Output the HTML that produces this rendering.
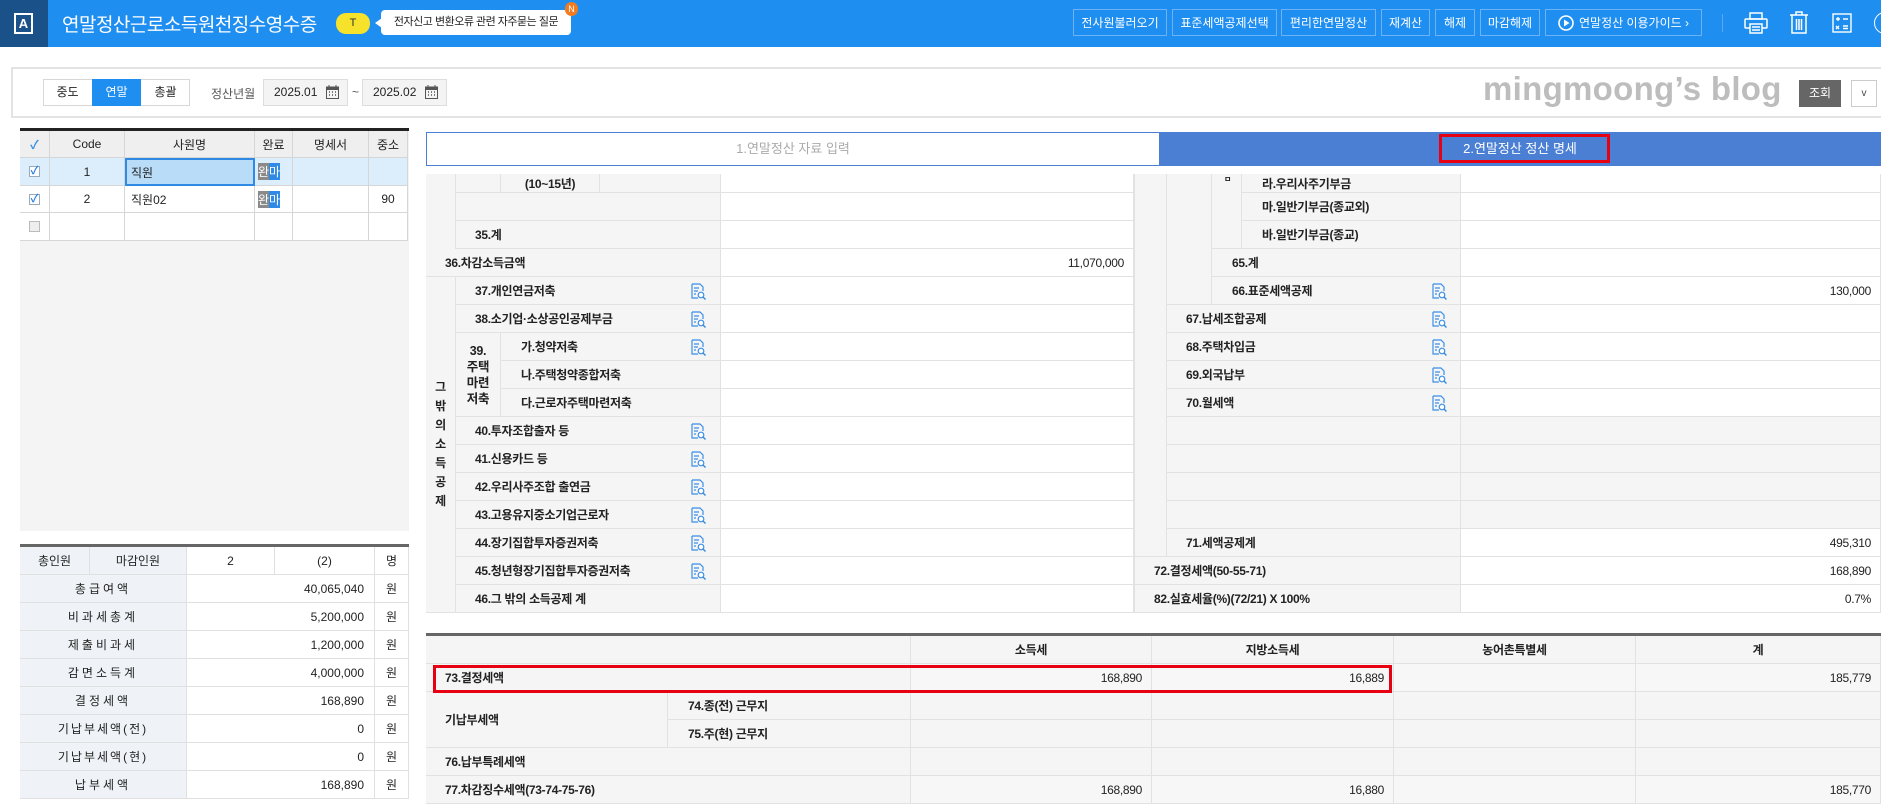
<!DOCTYPE html>
<html><head><meta charset="utf-8"><style>
*{margin:0;padding:0;box-sizing:border-box}
body{width:1881px;height:804px;position:relative;overflow:hidden;background:#fff;font-family:"Liberation Sans","Noto Sans CJK KR",sans-serif;font-size:12px;color:#222}
.p{position:absolute}
.a{position:absolute;display:flex;align-items:center;border-right:1px solid #e2e2e2;border-bottom:1px solid #e2e2e2;background:#f5f5f5;white-space:nowrap;font-weight:bold;letter-spacing:-0.3px}
.w{background:#fff;justify-content:flex-end;padding-right:9px;font-weight:normal}
.c{justify-content:center}
.hb{position:absolute;top:9px;height:27px;border:1px solid #6db2f4;color:#fff;font-size:12px;display:flex;align-items:center;justify-content:center}
.g{position:absolute;display:flex;align-items:center;justify-content:center;border-right:1px solid #d6d6d6;border-bottom:1px solid #d6d6d6;font-size:12px}
.s{position:absolute;display:flex;align-items:center;justify-content:center;border-right:1px solid #e0e0e0;border-bottom:1px solid #e0e0e0;font-size:12px;background:#eff3f7}
.ic{position:absolute;width:15px;height:17px}
</style></head><body>
<!-- header -->
<div class="p" style="left:0;top:0;width:1881px;height:47px;background:#1f8ef1"></div>
<div class="p" style="left:0;top:0;width:48px;height:47px;background:#1a5189"></div>
<div class="p" style="left:14px;top:13px;width:19px;height:21px;border:2px solid #fff;color:#fff;font-size:13px;font-weight:bold;text-align:center;line-height:17px">A</div>
<div class="p" style="left:62px;top:10px;color:#fff;font-size:19px;letter-spacing:-0.5px;font-family:'Noto Sans CJK KR',sans-serif">연말정산근로소득원천징수영수증</div>
<div class="p" style="left:336px;top:13px;width:34px;height:21px;border-radius:10px;background:#f7e22b;text-align:center;line-height:21px;font-size:11px;color:#333">T</div>
<div class="p" style="left:375px;top:18px;width:0;height:0;border-top:5px solid transparent;border-bottom:5px solid transparent;border-right:7px solid #fff"></div>
<div class="p" style="left:381px;top:10px;width:190px;height:25px;background:#fff;border-radius:4px;font-size:11px;line-height:25px;text-align:center;color:#222;letter-spacing:-0.5px">전자신고 변환오류 관련 자주묻는 질문</div>
<div class="p" style="left:565px;top:2px;width:13px;height:14px;border-radius:7px;background:#f27b21;color:#fff;font-size:9px;text-align:center;line-height:14px">N</div>
<div class="hb" style="left:1073px;width:94px">전사원불러오기</div>
<div class="hb" style="left:1172px;width:105px">표준세액공제선택</div>
<div class="hb" style="left:1281px;width:95px">편리한연말정산</div>
<div class="hb" style="left:1381px;width:49px">재계산</div>
<div class="hb" style="left:1435px;width:40px">해제</div>
<div class="hb" style="left:1480px;width:60px">마감해제</div>
<div class="hb" style="left:1545px;width:157px"><svg width="16" height="16" viewBox="0 0 16 16" style="margin-right:5px"><circle cx="8" cy="8" r="7" fill="none" stroke="#fff" stroke-width="1.6"/><path d="M6 4.5v7l5.5-3.5z" fill="#fff"/></svg>연말정산 이용가이드 ›</div>
<div class="p" style="left:1722px;top:14px;width:1px;height:18px;background:#5aa8f4"></div>
<svg class="p" style="left:1744px;top:12px" width="24" height="22" viewBox="0 0 24 22" fill="none" stroke="#fff" stroke-width="1.5"><rect x="6" y="1" width="12" height="6"/><rect x="1" y="7" width="22" height="9" rx="1"/><rect x="6" y="12" width="12" height="9" fill="#1f8ef1"/><path d="M8 15h8M8 18h8"/></svg>
<svg class="p" style="left:1789px;top:11px" width="20" height="23" viewBox="0 0 20 23" fill="none" stroke="#fff" stroke-width="1.5"><path d="M1 4h18M7 4V1h6v3M3 4v18h14V4M7.5 8v11M10 8v11M12.5 8v11"/></svg>
<svg class="p" style="left:1832px;top:13px" width="20" height="20" viewBox="0 0 20 20" fill="none" stroke="#fff" stroke-width="1.4"><rect x="1" y="1" width="18" height="18"/><path d="M4 6h4M6 4v4M11 6h5M4 13l3 3M7 13l-3 3M11 13h5M11 15.5h5"/></svg>
<div class="p" style="left:1874px;top:12px;width:22px;height:22px;border:1.5px solid #fff;border-radius:11px"></div>

<!-- toolbar panel -->
<div class="p" style="left:11px;top:67px;width:1870px;height:51px;border-top:2px solid #e3e3e3;border-bottom:2px solid #e3e3e3;border-left:2px solid #e3e3e3"></div>
<div class="p" style="left:43px;top:79px;width:147px;height:27px;border:1px solid #d7d7d7"></div>
<div class="p" style="left:43px;top:79px;width:49px;height:27px;line-height:27px;text-align:center">중도</div>
<div class="p" style="left:92px;top:79px;width:49px;height:27px;line-height:27px;text-align:center;background:#1f8ef1;color:#fff">연말</div>
<div class="p" style="left:141px;top:79px;width:49px;height:27px;line-height:27px;text-align:center">총괄</div>
<div class="p" style="left:211px;top:85px;color:#555">정산년월</div>
<div class="p" style="left:263px;top:79px;width:85px;height:27px;background:#f4f4f4;border:1px solid #ddd;line-height:25px;padding-left:10px;font-size:12px">2025.01</div>
<div class="p" style="left:352px;top:85px;color:#555">~</div>
<div class="p" style="left:362px;top:79px;width:85px;height:27px;background:#f4f4f4;border:1px solid #ddd;line-height:25px;padding-left:10px;font-size:12px">2025.02</div>
<svg class="p" style="left:326px;top:85px" width="13" height="14" viewBox="0 0 13 14"><rect x="0.5" y="2" width="12" height="11.5" fill="none" stroke="#555"/><rect x="0.5" y="2" width="12" height="3" fill="#555"/><path d="M3 0v3M10 0v3" stroke="#555"/><path d="M3 7h1M6 7h1M9 7h1M3 10h1M6 10h1M9 10h1" stroke="#555" stroke-width="1.5"/></svg>
<svg class="p" style="left:425px;top:85px" width="13" height="14" viewBox="0 0 13 14"><rect x="0.5" y="2" width="12" height="11.5" fill="none" stroke="#555"/><rect x="0.5" y="2" width="12" height="3" fill="#555"/><path d="M3 0v3M10 0v3" stroke="#555"/><path d="M3 7h1M6 7h1M9 7h1M3 10h1M6 10h1M9 10h1" stroke="#555" stroke-width="1.5"/></svg>
<div class="p" style="left:1483px;top:70px;font-size:33px;font-weight:bold;color:#bdbdbd;letter-spacing:0.3px;font-family:'Liberation Sans',sans-serif">mingmoong’s blog</div>
<div class="p" style="left:1799px;top:80px;width:42px;height:27px;background:#666;color:#fff;line-height:27px;text-align:center">조회</div>
<div class="p" style="left:1851px;top:80px;width:26px;height:27px;border:1px solid #ccc;line-height:25px;text-align:center;font-size:10px;color:#444">v</div>

<!-- left grid -->
<div class="p" style="left:20px;top:128px;width:389px;height:403px;background:#f4f4f4;border-top:3px solid #222"></div>
<div class="g" style="left:20px;top:131px;width:30px;height:27px;background:#efefef;color:#3a8ee6;font-weight:bold">✓</div>
<div class="g" style="left:50px;top:131px;width:75px;height:27px;background:#efefef">Code</div>
<div class="g" style="left:125px;top:131px;width:130px;height:27px;background:#efefef">사원명</div>
<div class="g" style="left:255px;top:131px;width:38px;height:27px;background:#efefef">완료</div>
<div class="g" style="left:293px;top:131px;width:76px;height:27px;background:#efefef">명세서</div>
<div class="g" style="left:369px;top:131px;width:39px;height:27px;background:#efefef">중소</div>
<div class="g" style="left:20px;top:158px;width:30px;height:28px;background:#dcedfb"><span style="display:inline-block;width:11px;height:11px;border:1px solid #9ab;background:#fff;color:#2a7fe0;font-size:11px;line-height:9px;text-align:center;font-weight:bold">✓</span></div>
<div class="g" style="left:50px;top:158px;width:75px;height:28px;background:#dcedfb">1</div>
<div class="g" style="left:125px;top:158px;width:130px;height:28px;background:#b9dcf8;border:2px solid #2f8ae6;justify-content:flex-start;padding-left:4px">직원</div>
<div class="g" style="left:255px;top:158px;width:38px;height:28px;background:#dcedfb;justify-content:flex-start;padding-left:3px"><span style="background:#8a8a8a;color:#fff">완</span><span style="background:#2f8ae6;color:#fff">마</span></div>
<div class="g" style="left:293px;top:158px;width:76px;height:28px;background:#dcedfb"></div>
<div class="g" style="left:369px;top:158px;width:39px;height:28px;background:#dcedfb"></div>
<div class="g" style="left:20px;top:186px;width:30px;height:27px;background:#fff"><span style="display:inline-block;width:11px;height:11px;border:1px solid #9ab;background:#fff;color:#2a7fe0;font-size:11px;line-height:9px;text-align:center;font-weight:bold">✓</span></div>
<div class="g" style="left:50px;top:186px;width:75px;height:27px;background:#fff">2</div>
<div class="g" style="left:125px;top:186px;width:130px;height:27px;background:#fff;justify-content:flex-start;padding-left:6px">직원02</div>
<div class="g" style="left:255px;top:186px;width:38px;height:27px;background:#fff;justify-content:flex-start;padding-left:3px"><span style="background:#8a8a8a;color:#fff">완</span><span style="background:#2f8ae6;color:#fff">마</span></div>
<div class="g" style="left:293px;top:186px;width:76px;height:27px;background:#fff"></div>
<div class="g" style="left:369px;top:186px;width:39px;height:27px;background:#fff">90</div>
<div class="g" style="left:20px;top:213px;width:30px;height:28px;background:#fff"><span style="display:inline-block;width:11px;height:11px;border:1px solid #bbb;background:#eee"></span></div>
<div class="g" style="left:50px;top:213px;width:75px;height:28px;background:#fff"></div>
<div class="g" style="left:125px;top:213px;width:130px;height:28px;background:#fff"></div>
<div class="g" style="left:255px;top:213px;width:38px;height:28px;background:#fff"></div>
<div class="g" style="left:293px;top:213px;width:76px;height:28px;background:#fff"></div>
<div class="g" style="left:369px;top:213px;width:39px;height:28px;background:#fff"></div>

<!-- summary -->
<div class="p" style="left:20px;top:544px;width:389px;height:3px;background:#666"></div>
<div class="s" style="left:20px;top:547px;width:70px;height:28px">총인원</div>
<div class="s" style="left:90px;top:547px;width:97px;height:28px">마감인원</div>
<div class="s" style="left:187px;top:547px;width:88px;height:28px;background:#fff">2</div>
<div class="s" style="left:275px;top:547px;width:100px;height:28px;background:#fff">(2)</div>
<div class="s" style="left:375px;top:547px;width:34px;height:28px;background:#fff">명</div>
<div class="s" style="left:20px;top:575px;width:167px;height:28px;letter-spacing:3px">총급여액</div><div class="s" style="left:187px;top:575px;width:188px;height:28px;background:#fff;justify-content:flex-end;padding-right:10px">40,065,040</div><div class="s" style="left:375px;top:575px;width:34px;height:28px;background:#fff">원</div>
<div class="s" style="left:20px;top:603px;width:167px;height:28px;letter-spacing:3px">비과세총계</div><div class="s" style="left:187px;top:603px;width:188px;height:28px;background:#fff;justify-content:flex-end;padding-right:10px">5,200,000</div><div class="s" style="left:375px;top:603px;width:34px;height:28px;background:#fff">원</div>
<div class="s" style="left:20px;top:631px;width:167px;height:28px;letter-spacing:3px">제출비과세</div><div class="s" style="left:187px;top:631px;width:188px;height:28px;background:#fff;justify-content:flex-end;padding-right:10px">1,200,000</div><div class="s" style="left:375px;top:631px;width:34px;height:28px;background:#fff">원</div>
<div class="s" style="left:20px;top:659px;width:167px;height:28px;letter-spacing:3px">감면소득계</div><div class="s" style="left:187px;top:659px;width:188px;height:28px;background:#fff;justify-content:flex-end;padding-right:10px">4,000,000</div><div class="s" style="left:375px;top:659px;width:34px;height:28px;background:#fff">원</div>
<div class="s" style="left:20px;top:687px;width:167px;height:28px;letter-spacing:3px">결정세액</div><div class="s" style="left:187px;top:687px;width:188px;height:28px;background:#fff;justify-content:flex-end;padding-right:10px">168,890</div><div class="s" style="left:375px;top:687px;width:34px;height:28px;background:#fff">원</div>
<div class="s" style="left:20px;top:715px;width:167px;height:28px;letter-spacing:2px">기납부세액(전)</div><div class="s" style="left:187px;top:715px;width:188px;height:28px;background:#fff;justify-content:flex-end;padding-right:10px">0</div><div class="s" style="left:375px;top:715px;width:34px;height:28px;background:#fff">원</div>
<div class="s" style="left:20px;top:743px;width:167px;height:28px;letter-spacing:2px">기납부세액(현)</div><div class="s" style="left:187px;top:743px;width:188px;height:28px;background:#fff;justify-content:flex-end;padding-right:10px">0</div><div class="s" style="left:375px;top:743px;width:34px;height:28px;background:#fff">원</div>
<div class="s" style="left:20px;top:771px;width:167px;height:28px;letter-spacing:3px">납부세액</div><div class="s" style="left:187px;top:771px;width:188px;height:28px;background:#fff;justify-content:flex-end;padding-right:10px">168,890</div><div class="s" style="left:375px;top:771px;width:34px;height:28px;background:#fff">원</div>

<!-- tabs -->
<div class="p" style="left:426px;top:132px;width:733px;height:34px;border:1px solid #4a7fd4;border-right:none;line-height:32px;text-align:center;color:#aaa;font-size:13px">1.연말정산 자료 입력</div>
<div class="p" style="left:1159px;top:132px;width:722px;height:34px;background:#4a7fd4;line-height:34px;text-align:center;color:#fff;font-size:13px">2.연말정산 정산 명세</div>
<div class="p" style="left:1439px;top:134px;width:171px;height:29px;border:3px solid #e60012"></div>

<!-- main table left -->
<div class="a" style="left:426px;top:174px;width:30px;height:75px;border-bottom:none"></div>
<div class="a" style="left:456px;top:174px;width:45px;height:19px"></div>
<div class="a c" style="left:501px;top:174px;width:99px;height:19px">(10~15년)</div>
<div class="a" style="left:600px;top:174px;width:121px;height:19px"></div>
<div class="a w" style="left:721px;top:174px;width:413px;height:19px"></div>
<div class="a" style="left:456px;top:193px;width:265px;height:28px"></div>
<div class="a w" style="left:721px;top:193px;width:413px;height:28px"></div>
<div class="a" style="left:456px;top:221px;width:265px;height:28px;padding-left:19px">35.계</div>
<div class="a w" style="left:721px;top:221px;width:413px;height:28px"></div>
<div class="a" style="left:426px;top:249px;width:295px;height:28px;padding-left:19px">36.차감소득금액</div>
<div class="a w" style="left:721px;top:249px;width:413px;height:28px">11,070,000</div>
<div class="a c" style="left:426px;top:277px;width:30px;height:336px;white-space:normal;text-align:center;line-height:19px;padding:0 9px">그 밖 의 소 득 공 제</div>

<div class="a" style="left:456px;top:277px;width:265px;height:28px;padding-left:19px">37.개인연금저축</div><div class="a w" style="left:721px;top:277px;width:413px;height:28px"></div>
<div class="a" style="left:456px;top:305px;width:265px;height:28px;padding-left:19px">38.소기업·소상공인공제부금</div><div class="a w" style="left:721px;top:305px;width:413px;height:28px"></div>
<div class="a c" style="left:456px;top:333px;width:45px;height:84px;text-align:center;line-height:16px;font-size:12.5px">39.<br>주택<br>마련<br>저축</div>
<div class="a" style="left:501px;top:333px;width:220px;height:28px;padding-left:20px">가.청약저축</div><div class="a w" style="left:721px;top:333px;width:413px;height:28px"></div>
<div class="a" style="left:501px;top:361px;width:220px;height:28px;padding-left:20px">나.주택청약종합저축</div><div class="a w" style="left:721px;top:361px;width:413px;height:28px"></div>
<div class="a" style="left:501px;top:389px;width:220px;height:28px;padding-left:20px">다.근로자주택마련저축</div><div class="a w" style="left:721px;top:389px;width:413px;height:28px"></div>
<div class="a" style="left:456px;top:417px;width:265px;height:28px;padding-left:19px">40.투자조합출자 등</div><div class="a w" style="left:721px;top:417px;width:413px;height:28px"></div>
<div class="a" style="left:456px;top:445px;width:265px;height:28px;padding-left:19px">41.신용카드 등</div><div class="a w" style="left:721px;top:445px;width:413px;height:28px"></div>
<div class="a" style="left:456px;top:473px;width:265px;height:28px;padding-left:19px">42.우리사주조합 출연금</div><div class="a w" style="left:721px;top:473px;width:413px;height:28px"></div>
<div class="a" style="left:456px;top:501px;width:265px;height:28px;padding-left:19px">43.고용유지중소기업근로자</div><div class="a w" style="left:721px;top:501px;width:413px;height:28px"></div>
<div class="a" style="left:456px;top:529px;width:265px;height:28px;padding-left:19px">44.장기집합투자증권저축</div><div class="a w" style="left:721px;top:529px;width:413px;height:28px"></div>
<div class="a" style="left:456px;top:557px;width:265px;height:28px;padding-left:19px">45.청년형장기집합투자증권저축</div><div class="a w" style="left:721px;top:557px;width:413px;height:28px"></div>
<div class="a" style="left:456px;top:585px;width:265px;height:28px;padding-left:19px">46.그 밖의 소득공제 계</div><div class="a w" style="left:721px;top:585px;width:413px;height:28px"></div>

<!-- main table right -->
<div class="a" style="left:1134px;top:174px;width:33px;height:383px;border-left:1px solid #e2e2e2"></div>
<div class="a" style="left:1167px;top:174px;width:45px;height:131px"></div>
<div class="a" style="left:1212px;top:174px;width:30px;height:75px;align-items:flex-start;padding-left:12px;font-size:8px">ㅁ</div>
<div class="a" style="left:1242px;top:174px;width:219px;height:19px;padding-left:20px">라.우리사주기부금</div><div class="a w" style="left:1461px;top:174px;width:420px;height:19px"></div>
<div class="a" style="left:1242px;top:193px;width:219px;height:28px;padding-left:20px">마.일반기부금(종교외)</div><div class="a w" style="left:1461px;top:193px;width:420px;height:28px"></div>
<div class="a" style="left:1242px;top:221px;width:219px;height:28px;padding-left:20px">바.일반기부금(종교)</div><div class="a w" style="left:1461px;top:221px;width:420px;height:28px"></div>
<div class="a" style="left:1212px;top:249px;width:249px;height:28px;padding-left:20px">65.계</div><div class="a w" style="left:1461px;top:249px;width:420px;height:28px"></div>
<div class="a" style="left:1212px;top:277px;width:249px;height:28px;padding-left:20px">66.표준세액공제</div><div class="a w" style="left:1461px;top:277px;width:420px;height:28px">130,000</div>
<div class="a" style="left:1167px;top:305px;width:294px;height:28px;padding-left:19px">67.납세조합공제</div><div class="a w" style="left:1461px;top:305px;width:420px;height:28px"></div>
<div class="a" style="left:1167px;top:333px;width:294px;height:28px;padding-left:19px">68.주택차입금</div><div class="a w" style="left:1461px;top:333px;width:420px;height:28px"></div>
<div class="a" style="left:1167px;top:361px;width:294px;height:28px;padding-left:19px">69.외국납부</div><div class="a w" style="left:1461px;top:361px;width:420px;height:28px"></div>
<div class="a" style="left:1167px;top:389px;width:294px;height:28px;padding-left:19px">70.월세액</div><div class="a w" style="left:1461px;top:389px;width:420px;height:28px"></div>
<div class="a" style="left:1167px;top:417px;width:294px;height:28px"></div><div class="a" style="left:1461px;top:417px;width:420px;height:28px"></div>
<div class="a" style="left:1167px;top:445px;width:294px;height:28px"></div><div class="a" style="left:1461px;top:445px;width:420px;height:28px"></div>
<div class="a" style="left:1167px;top:473px;width:294px;height:28px"></div><div class="a" style="left:1461px;top:473px;width:420px;height:28px"></div>
<div class="a" style="left:1167px;top:501px;width:294px;height:28px"></div><div class="a" style="left:1461px;top:501px;width:420px;height:28px"></div>
<div class="a" style="left:1167px;top:529px;width:294px;height:28px;padding-left:19px">71.세액공제계</div><div class="a w" style="left:1461px;top:529px;width:420px;height:28px">495,310</div>
<div class="a" style="left:1134px;top:557px;width:327px;height:28px;padding-left:19px;border-left:1px solid #e2e2e2">72.결정세액(50-55-71)</div><div class="a w" style="left:1461px;top:557px;width:420px;height:28px">168,890</div>
<div class="a" style="left:1134px;top:585px;width:327px;height:28px;padding-left:19px;border-left:1px solid #e2e2e2">82.실효세율(%)(72/21) X 100%</div><div class="a w" style="left:1461px;top:585px;width:420px;height:28px">0.7%</div>

<!-- icons -->
<svg width="0" height="0" style="position:absolute"><defs><g id="q"><path d="M1 1h8l3 3v4M1 1v14h6" fill="none" stroke="#3a8ee6" stroke-width="1.2"/><path d="M3 5h5M3 8h4M3 11h2" stroke="#3a8ee6" stroke-width="1.2"/><circle cx="10" cy="12" r="2.8" fill="#fff" stroke="#3a8ee6" stroke-width="1.2"/><path d="M12 14l2.5 2.5" stroke="#3a8ee6" stroke-width="1.5"/></g></defs></svg>
<svg class="ic" style="left:691px;top:283px"><use href="#q"/></svg>
<svg class="ic" style="left:691px;top:311px"><use href="#q"/></svg>
<svg class="ic" style="left:691px;top:339px"><use href="#q"/></svg>
<svg class="ic" style="left:691px;top:423px"><use href="#q"/></svg>
<svg class="ic" style="left:691px;top:451px"><use href="#q"/></svg>
<svg class="ic" style="left:691px;top:479px"><use href="#q"/></svg>
<svg class="ic" style="left:691px;top:507px"><use href="#q"/></svg>
<svg class="ic" style="left:691px;top:535px"><use href="#q"/></svg>
<svg class="ic" style="left:691px;top:563px"><use href="#q"/></svg>
<svg class="ic" style="left:1432px;top:283px"><use href="#q"/></svg>
<svg class="ic" style="left:1432px;top:311px"><use href="#q"/></svg>
<svg class="ic" style="left:1432px;top:339px"><use href="#q"/></svg>
<svg class="ic" style="left:1432px;top:367px"><use href="#q"/></svg>
<svg class="ic" style="left:1432px;top:395px"><use href="#q"/></svg>

<!-- bottom table -->
<div class="p" style="left:426px;top:633px;width:1455px;height:3px;background:#666"></div>
<div class="a" style="left:426px;top:636px;width:485px;height:28px"></div>
<div class="a c" style="left:911px;top:636px;width:241px;height:28px">소득세</div>
<div class="a c" style="left:1152px;top:636px;width:242px;height:28px">지방소득세</div>
<div class="a c" style="left:1394px;top:636px;width:242px;height:28px">농어촌특별세</div>
<div class="a c" style="left:1636px;top:636px;width:245px;height:28px">계</div>
<div class="a" style="left:426px;top:664px;width:485px;height:28px;padding-left:19px">73.결정세액</div>
<div class="a w" style="left:911px;top:664px;width:241px;height:28px;background:#f7f7f7">168,890</div>
<div class="a w" style="left:1152px;top:664px;width:242px;height:28px;background:#f7f7f7">16,889</div>
<div class="a w" style="left:1394px;top:664px;width:242px;height:28px;background:#f7f7f7"></div>
<div class="a w" style="left:1636px;top:664px;width:245px;height:28px;background:#f7f7f7">185,779</div>
<div class="a" style="left:426px;top:692px;width:242px;height:56px;padding-left:19px">기납부세액</div>
<div class="a" style="left:668px;top:692px;width:243px;height:28px;padding-left:20px">74.종(전) 근무지</div>
<div class="a" style="left:668px;top:720px;width:243px;height:28px;padding-left:20px">75.주(현) 근무지</div>
<div class="a" style="left:426px;top:748px;width:485px;height:28px;padding-left:19px">76.납부특례세액</div>
<div class="a" style="left:426px;top:776px;width:485px;height:28px;padding-left:19px">77.차감징수세액(73-74-75-76)</div>
<div class="a" style="left:911px;top:692px;width:241px;height:28px"></div><div class="a" style="left:1152px;top:692px;width:242px;height:28px"></div><div class="a" style="left:1394px;top:692px;width:242px;height:28px"></div><div class="a" style="left:1636px;top:692px;width:245px;height:28px"></div>
<div class="a" style="left:911px;top:720px;width:241px;height:28px"></div><div class="a" style="left:1152px;top:720px;width:242px;height:28px"></div><div class="a" style="left:1394px;top:720px;width:242px;height:28px"></div><div class="a" style="left:1636px;top:720px;width:245px;height:28px"></div>
<div class="a" style="left:911px;top:748px;width:241px;height:28px"></div><div class="a" style="left:1152px;top:748px;width:242px;height:28px"></div><div class="a" style="left:1394px;top:748px;width:242px;height:28px"></div><div class="a" style="left:1636px;top:748px;width:245px;height:28px"></div>
<div class="a w" style="left:911px;top:776px;width:241px;height:28px;background:#f7f7f7">168,890</div>
<div class="a w" style="left:1152px;top:776px;width:242px;height:28px;background:#f7f7f7">16,880</div>
<div class="a w" style="left:1394px;top:776px;width:242px;height:28px;background:#f7f7f7"></div>
<div class="a w" style="left:1636px;top:776px;width:245px;height:28px;background:#f7f7f7">185,770</div>
<div class="p" style="left:433px;top:665px;width:959px;height:28px;border:3px solid #e60012"></div>
</body></html>
